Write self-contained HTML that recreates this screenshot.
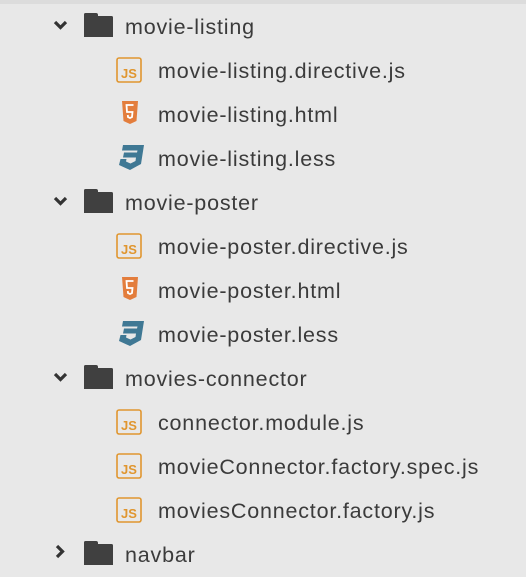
<!DOCTYPE html><html><head><style>
body{margin:0;width:526px;height:552px;overflow:hidden;background:#e8e8e8;font-family:"Liberation Sans",sans-serif;position:relative}
.top{position:absolute;left:0;top:0;width:526px;height:4px;background:#dcdcdc}
.r{position:absolute;left:0;height:44px;width:526px}
.t{position:absolute;font-size:21.5px;letter-spacing:0.8px;color:#3b3b3b;line-height:44px;top:0}
svg{position:absolute}
</style></head><body>
<div class="top"></div>
<div class="r" style="top:5px">
<svg style="left:53px;top:15px" width="15" height="12" viewBox="0 0 15 12"><path d="M2 2 L7.5 7.5 L13 2" stroke="#333" stroke-width="3.2" fill="none"/></svg>
<svg style="left:84px;top:8px" width="29" height="24" viewBox="0 0 29 24"><path d="M0 1.5 Q0 0 1.5 0 H12 Q14 0 14 2 V3 H27.5 Q29 3 29 4.5 V24 H0 Z" fill="#404040"/></svg>
<div class="t" style="left:125px">movie-listing</div></div>
<div class="r" style="top:49px"><svg style="left:116px;top:8px" width="26" height="26" viewBox="0 0 26 26"><rect x="1" y="1" width="24" height="24" rx="2" fill="none" stroke="#e0962f" stroke-width="1.6"/><text x="13" y="21" font-family="Liberation Sans" font-weight="bold" font-size="13" fill="#e0962f" text-anchor="middle">JS</text></svg><div class="t" style="left:158px">movie-listing.directive.js</div></div>
<div class="r" style="top:93px"><svg style="left:122px;top:8px" width="16" height="24" viewBox="0 0 16 24"><path d="M0 0 H16 L14.5 20 L8 23 L1.5 20 Z" fill="#e37d3c"/><path d="M11.5 4 H4.5 L5 11 H10.5 L10 16 L8 17 L6 16 L5.8 14" stroke="#fff" stroke-width="1.8" fill="none"/></svg><div class="t" style="left:158px">movie-listing.html</div></div>
<div class="r" style="top:137px"><svg style="left:119px;top:8px" width="25" height="26" viewBox="0 0 25 26"><path d="M4 0 H25 L22 19 L11 25 L0 20 L1.5 14 H7.5 L7 16.5 L11.5 18.5 L16.5 16 L17 12.5 H4 L5 7.5 H18 L18.5 5.5 H3 Z" fill="#3f7894"/></svg><div class="t" style="left:158px">movie-listing.less</div></div>

<div class="r" style="top:181px">
<svg style="left:53px;top:15px" width="15" height="12" viewBox="0 0 15 12"><path d="M2 2 L7.5 7.5 L13 2" stroke="#333" stroke-width="3.2" fill="none"/></svg>
<svg style="left:84px;top:8px" width="29" height="24" viewBox="0 0 29 24"><path d="M0 1.5 Q0 0 1.5 0 H12 Q14 0 14 2 V3 H27.5 Q29 3 29 4.5 V24 H0 Z" fill="#404040"/></svg>
<div class="t" style="left:125px">movie-poster</div></div>
<div class="r" style="top:225px"><svg style="left:116px;top:8px" width="26" height="26" viewBox="0 0 26 26"><rect x="1" y="1" width="24" height="24" rx="2" fill="none" stroke="#e0962f" stroke-width="1.6"/><text x="13" y="21" font-family="Liberation Sans" font-weight="bold" font-size="13" fill="#e0962f" text-anchor="middle">JS</text></svg><div class="t" style="left:158px">movie-poster.directive.js</div></div>
<div class="r" style="top:269px"><svg style="left:122px;top:8px" width="16" height="24" viewBox="0 0 16 24"><path d="M0 0 H16 L14.5 20 L8 23 L1.5 20 Z" fill="#e37d3c"/><path d="M11.5 4 H4.5 L5 11 H10.5 L10 16 L8 17 L6 16 L5.8 14" stroke="#fff" stroke-width="1.8" fill="none"/></svg><div class="t" style="left:158px">movie-poster.html</div></div>
<div class="r" style="top:313px"><svg style="left:119px;top:8px" width="25" height="26" viewBox="0 0 25 26"><path d="M4 0 H25 L22 19 L11 25 L0 20 L1.5 14 H7.5 L7 16.5 L11.5 18.5 L16.5 16 L17 12.5 H4 L5 7.5 H18 L18.5 5.5 H3 Z" fill="#3f7894"/></svg><div class="t" style="left:158px">movie-poster.less</div></div>

<div class="r" style="top:357px">
<svg style="left:53px;top:15px" width="15" height="12" viewBox="0 0 15 12"><path d="M2 2 L7.5 7.5 L13 2" stroke="#333" stroke-width="3.2" fill="none"/></svg>
<svg style="left:84px;top:8px" width="29" height="24" viewBox="0 0 29 24"><path d="M0 1.5 Q0 0 1.5 0 H12 Q14 0 14 2 V3 H27.5 Q29 3 29 4.5 V24 H0 Z" fill="#404040"/></svg>
<div class="t" style="left:125px">movies-connector</div></div>
<div class="r" style="top:401px"><svg style="left:116px;top:8px" width="26" height="26" viewBox="0 0 26 26"><rect x="1" y="1" width="24" height="24" rx="2" fill="none" stroke="#e0962f" stroke-width="1.6"/><text x="13" y="21" font-family="Liberation Sans" font-weight="bold" font-size="13" fill="#e0962f" text-anchor="middle">JS</text></svg><div class="t" style="left:158px">connector.module.js</div></div>
<div class="r" style="top:445px"><svg style="left:116px;top:8px" width="26" height="26" viewBox="0 0 26 26"><rect x="1" y="1" width="24" height="24" rx="2" fill="none" stroke="#e0962f" stroke-width="1.6"/><text x="13" y="21" font-family="Liberation Sans" font-weight="bold" font-size="13" fill="#e0962f" text-anchor="middle">JS</text></svg><div class="t" style="left:158px">movieConnector.factory.spec.js</div></div>
<div class="r" style="top:489px"><svg style="left:116px;top:8px" width="26" height="26" viewBox="0 0 26 26"><rect x="1" y="1" width="24" height="24" rx="2" fill="none" stroke="#e0962f" stroke-width="1.6"/><text x="13" y="21" font-family="Liberation Sans" font-weight="bold" font-size="13" fill="#e0962f" text-anchor="middle">JS</text></svg><div class="t" style="left:158px">moviesConnector.factory.js</div></div>

<div class="r" style="top:533px">
<svg style="left:55px;top:11px" width="12" height="15" viewBox="0 0 12 15"><path d="M2 2 L7.5 7.5 L2 13" stroke="#333" stroke-width="3.2" fill="none"/></svg>
<svg style="left:84px;top:8px" width="29" height="24" viewBox="0 0 29 24"><path d="M0 1.5 Q0 0 1.5 0 H12 Q14 0 14 2 V3 H27.5 Q29 3 29 4.5 V24 H0 Z" fill="#404040"/></svg>
<div class="t" style="left:125px">navbar</div></div>
</body></html>
